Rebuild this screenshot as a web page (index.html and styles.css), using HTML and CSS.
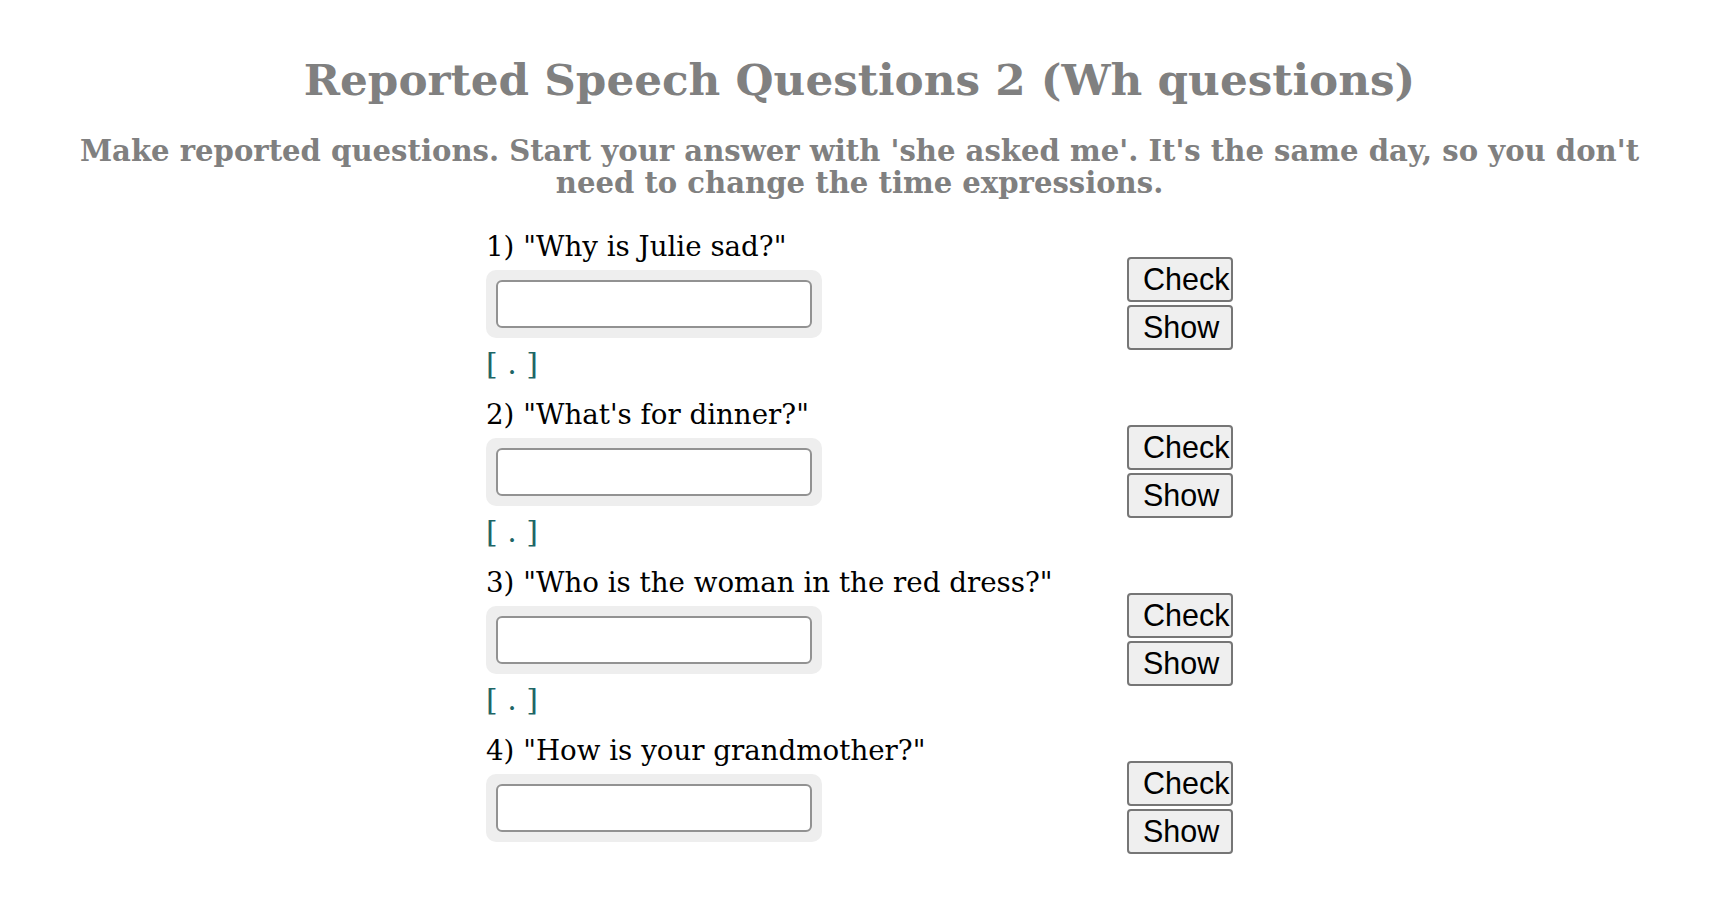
FILE: index.html
```html
<!DOCTYPE html>
<html lang="en">
<head>
    <meta charset="UTF-8">
    <title>Reported Speech Questions 2 (Wh questions)</title>
    <link rel="stylesheet" href="styles.css">
</head>
<body>
    <h1 class="title">Reported Speech Questions 2 (Wh questions)</h1>
    <h2 class="instructions">Make reported questions. Start your answer with 'she asked me'. It's the same day, so you don't need to change the time expressions.</h2>

    <div class="quiz">
        <div class="item">
            <div class="prompt">
                <div class="question">1) "Why is Julie sad?"</div>
                <div class="answer-box"><input type="text" class="answer"></div>
                <div class="feedback">[ . ]</div>
            </div>
            <div class="actions">
                <button type="button">Check</button>
                <button type="button">Show</button>
            </div>
        </div>
        <div class="item">
            <div class="prompt">
                <div class="question">2) "What's for dinner?"</div>
                <div class="answer-box"><input type="text" class="answer"></div>
                <div class="feedback">[ . ]</div>
            </div>
            <div class="actions">
                <button type="button">Check</button>
                <button type="button">Show</button>
            </div>
        </div>
        <div class="item">
            <div class="prompt">
                <div class="question">3) "Who is the woman in the red dress?"</div>
                <div class="answer-box"><input type="text" class="answer"></div>
                <div class="feedback">[ . ]</div>
            </div>
            <div class="actions">
                <button type="button">Check</button>
                <button type="button">Show</button>
            </div>
        </div>
        <div class="item">
            <div class="prompt">
                <div class="question">4) "How is your grandmother?"</div>
                <div class="answer-box"><input type="text" class="answer"></div>
            </div>
            <div class="actions">
                <button type="button">Check</button>
                <button type="button">Show</button>
            </div>
        </div>
    </div>
</body>
</html>
```

FILE: styles.css
```css
:root {
    --heading-color: #808080;
    --feedback-color: #1e6666;
    --box-color: #eeeeee;
}

body {
    margin: 0;
    padding: 0 17px 0 0;
    font-family: "DejaVu Serif", serif;
    color: #000;
    background: #fff;
}

.title {
    margin: 56px 0 0;
    font-size: 43.7px;
    line-height: 48px;
    font-weight: bold;
    color: var(--heading-color);
    text-align: center;
}

.instructions {
    margin: 31px 60px 0;
    font-size: 29.1px;
    line-height: 32px;
    font-weight: bold;
    color: var(--heading-color);
    text-align: center;
}

.quiz {
    display: flex;
    flex-direction: column;
    align-items: center;
    gap: 18px;
    margin-top: 31px;
}

.item {
    display: grid;
    grid-template-columns: 567px 106px;
    column-gap: 74px;
    align-items: start;
}

.question,
.feedback {
    font-size: 27.7px;
    line-height: 33px;
    white-space: nowrap;
}

.answer-box {
    width: 336px;
    margin-top: 7px;
    padding: 10px;
    box-sizing: border-box;
    background-color: var(--box-color);
    border-radius: 10px;
}

.answer {
    display: block;
    width: 100%;
    height: 48px;
    box-sizing: border-box;
    border: 2px solid #929292;
    border-radius: 6px;
    background: #fff;
    font-size: 24px;
}

.feedback {
    margin-top: 9px;
    font-size: 30px;
    color: var(--feedback-color);
}

.actions {
    display: flex;
    flex-direction: column;
    gap: 3px;
    padding-top: 27px;
}

.actions button {
    width: 106px;
    height: 45px;
    padding: 4px 14px;
    border: 2px solid #767676;
    border-radius: 4px;
    background-color: #efefef;
    color: #000;
    font-family: "Liberation Sans", Arial, sans-serif;
    font-size: 30.5px;
    line-height: 33px;
    text-align: center;
    white-space: nowrap;
    overflow: hidden;
}
```
